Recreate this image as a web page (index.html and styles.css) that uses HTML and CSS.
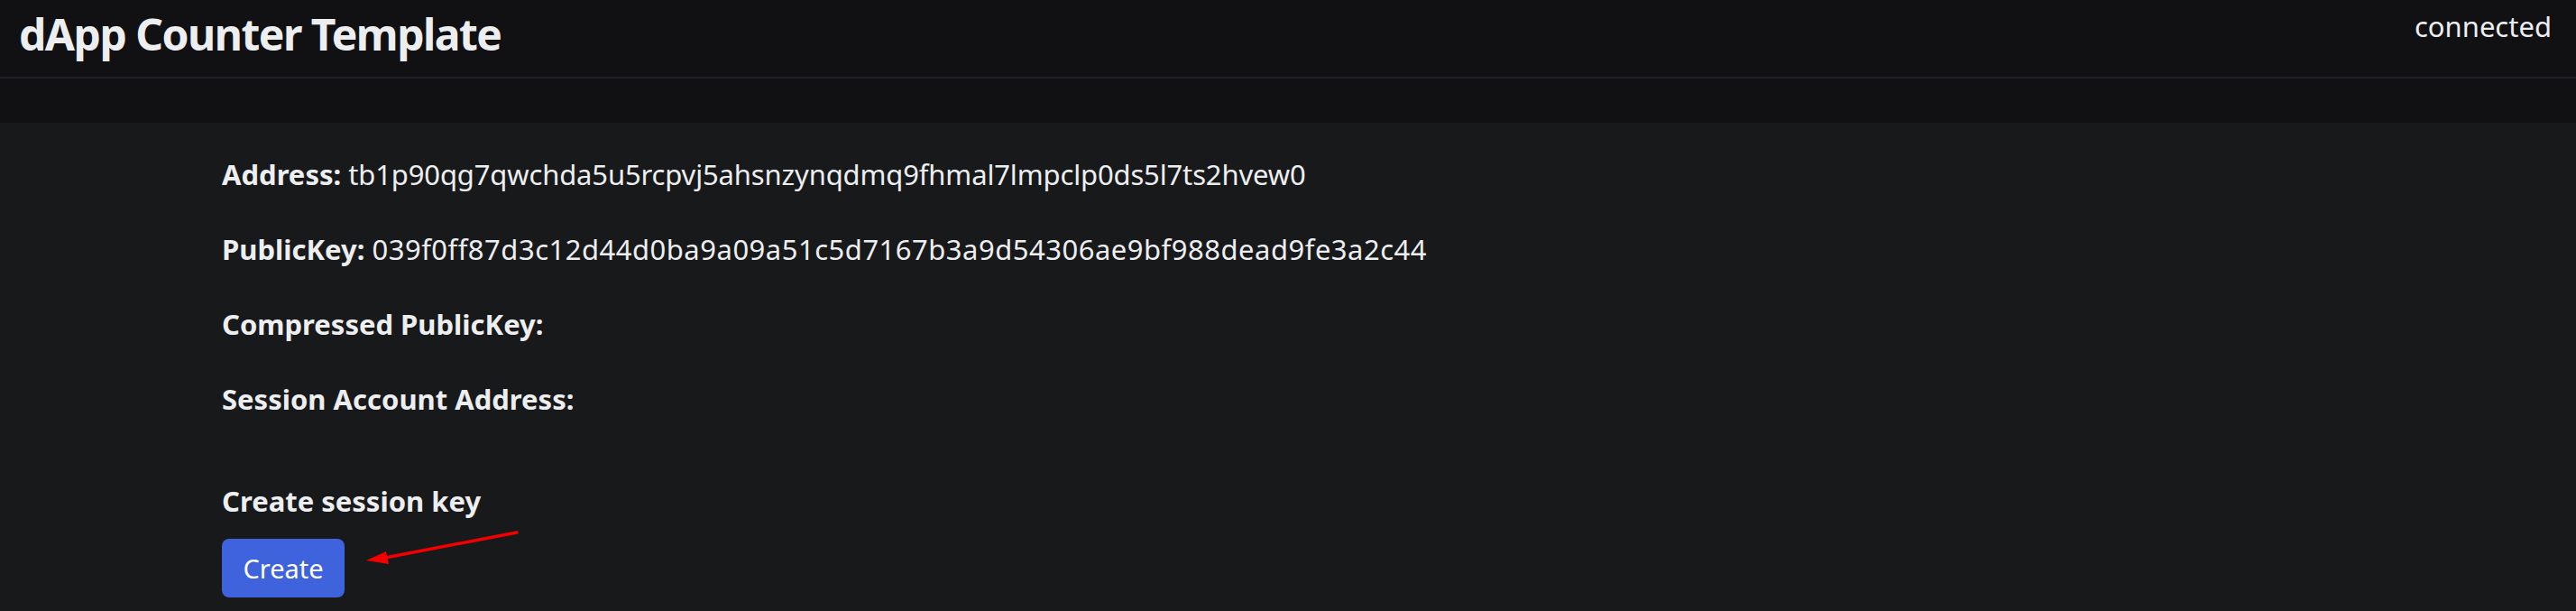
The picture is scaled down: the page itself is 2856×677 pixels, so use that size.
FILE: index.html
```html
<!DOCTYPE html>
<html lang="en">
<head>
<meta charset="utf-8">
<title>dApp Counter Template</title>
<link rel="stylesheet" href="styles.css">
</head>
<body>
<header class="topbar">
  <h1 class="title">dApp Counter Template</h1>
  <span class="status">connected</span>
</header>
<div class="band"></div>
<main class="content">
  <p class="row"><b>Address:</b> <span class="value">tb1p90qg7qwchda5u5rcpvj5ahsnzynqdmq9fhmal7lmpclp0ds5l7ts2hvew0</span></p>
  <p class="row"><b>PublicKey:</b> <span class="value hex">039f0ff87d3c12d44d0ba9a09a51c5d7167b3a9d54306ae9bf988dead9fe3a2c44</span></p>
  <p class="row"><b>Compressed PublicKey:</b></p>
  <p class="row"><b>Session Account Address:</b></p>
  <section class="session">
    <h2 class="session-title">Create session key</h2>
    <div class="actions">
      <button class="btn">Create</button>
      <svg class="arrow" width="180" height="50" viewBox="0 0 180 50" aria-hidden="true">
        <line x1="168" y1="3" x2="22" y2="31" stroke="#f40000" stroke-width="3.5" stroke-linecap="round"/>
        <polygon points="1,34 23,24 26,38" fill="#f40000"/>
      </svg>
    </div>
  </section>
</main>
</body>
</html>
```
FILE: styles.css
```css
html, body {
  margin: 0;
  padding: 0;
}
body {
  background: #18191b;
  color: #edeef0;
  font-family: "Noto Sans", "Open Sans", sans-serif;
  width: 2856px;
  height: 677px;
  overflow: hidden;
}
.topbar {
  display: flex;
  justify-content: space-between;
  align-items: flex-start;
  height: 87px;
  box-sizing: border-box;
  background: #111113;
  border-bottom: 2px solid #1e1f22;
  padding: 0 27px 0 21px;
}
.title {
  margin: 9px 0 0;
  font-size: 48px;
  line-height: 1.2;
  font-weight: 700;
  letter-spacing: -1.5px;
}
.status {
  padding-top: 11px;
  font-size: 31px;
  line-height: 1.2;
}
.band {
  height: 49px;
  background: #111113;
}
.content {
  padding: 32px 246px 0;
}
.row {
  margin: 0 0 32px;
  font-size: 31px;
  line-height: 51px;
}
.row b {
  font-weight: 700;
}
.value {
  letter-spacing: -0.15px;
}
.value.hex {
  letter-spacing: 0.5px;
}
.session {
  padding-top: 30px;
}
.session-title {
  margin: 0;
  font-size: 31px;
  line-height: 51px;
  font-weight: 700;
}
.actions {
  position: relative;
  margin-top: 16px;
  display: flex;
  align-items: flex-start;
}
.btn {
  background: #3e63dd;
  color: #ffffff;
  border: none;
  border-radius: 8px;
  width: 136px;
  height: 65px;
  padding: 0;
  font-family: "Noto Sans", "Open Sans", sans-serif;
  font-size: 29px;
}
.arrow {
  position: absolute;
  left: 159px;
  top: -10px;
}
```
